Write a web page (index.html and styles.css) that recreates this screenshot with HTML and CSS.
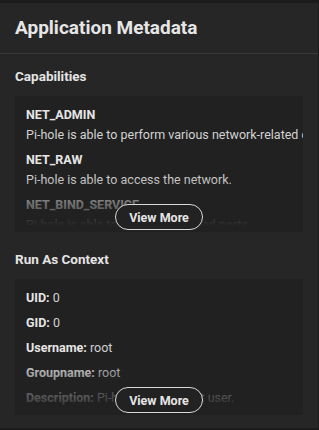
FILE: index.html
```html
<!DOCTYPE html>
<html>
<head>
<meta charset="utf-8">
<link rel="stylesheet" href="styles.css">
</head>
<body>
<div class="card">
  <div class="card-header">
    <h1 class="title">Application Metadata</h1>
  </div>
  <section class="section">
    <h2 class="section-title">Capabilities</h2>
    <div class="box">
      <div class="list">
        <div class="item">
          <div class="item-name">NET_ADMIN</div>
          <div class="item-desc">Pi-hole is able to perform various network-related operations.</div>
        </div>
        <div class="item">
          <div class="item-name">NET_RAW</div>
          <div class="item-desc">Pi-hole is able to access the network.</div>
        </div>
        <div class="item">
          <div class="item-name">NET_BIND_SERVICE</div>
          <div class="item-desc">Pi-hole is able to bind to privileged ports.</div>
        </div>
      </div>
      <div class="fade"></div>
      <button class="more">View More</button>
    </div>
  </section>
  <section class="section">
    <h2 class="section-title">Run As Context</h2>
    <div class="box">
      <div class="rows">
        <div class="row"><span class="key">UID:</span> <span class="val">0</span></div>
        <div class="row"><span class="key">GID:</span> <span class="val">0</span></div>
        <div class="row"><span class="key">Username:</span> <span class="val">root</span></div>
        <div class="row"><span class="key">Groupname:</span> <span class="val">root</span></div>
        <div class="row"><span class="key">Description:</span> <span class="val">Pi-hole runs as root user.</span></div>
      </div>
      <div class="fade"></div>
      <button class="more">View More</button>
    </div>
  </section>
</div>
</body>
</html>
```

FILE: styles.css
```css
html, body {
  margin: 0;
  padding: 0;
  background: #1b1b1b;
}
body {
  padding: 3px 1px 0 0;
  font-family: Roboto, "Liberation Sans", sans-serif;
  color: #e2e2e2;
}
.card {
  background: #262626;
  height: 425px;
  overflow: hidden;
}
.card-header {
  padding: 14px 15px 14px;
  border-bottom: 1px solid #3a3a3a;
}
.title {
  margin: 0;
  font-size: 19px;
  line-height: 22px;
  font-weight: 700;
  color: #e6e6e6;
}
.section {
  padding: 14px 15px 0;
}
.section + .section {
  padding-top: 19px;
}
.section-title {
  margin: 0 0 12px;
  font-size: 13.5px;
  line-height: 16px;
  font-weight: 700;
  color: #e4e4e4;
}
.box {
  position: relative;
  background: #212121;
  height: 136px;
  overflow: hidden;
  padding: 10px 0 0 11px;
  box-sizing: border-box;
}
.list {
  display: flex;
  flex-direction: column;
  gap: 7px;
}
.item-name {
  font-size: 12.5px;
  line-height: 18px;
  font-weight: 700;
  color: #e6e6e6;
  white-space: nowrap;
}
.item-desc {
  margin-top: 2px;
  font-size: 12.5px;
  line-height: 18px;
  color: #d2d2d2;
  white-space: nowrap;
}
.rows {
  display: flex;
  flex-direction: column;
  gap: 7px;
}
.row {
  font-size: 12.5px;
  line-height: 18px;
  white-space: nowrap;
}
.key {
  font-weight: 700;
  color: #e6e6e6;
}
.val {
  color: #d2d2d2;
}
.fade {
  position: absolute;
  left: 0;
  right: 0;
  bottom: 0;
  height: 56px;
  background: linear-gradient(to bottom, rgba(33,33,33,0) 0%, rgba(33,33,33,0.3) 25%, rgba(33,33,33,0.6) 50%, rgba(33,33,33,0.75) 70%, #212121 90%, #212121 100%);
}
.more {
  position: absolute;
  left: 50%;
  bottom: 2px;
  transform: translateX(-50%);
  width: 88px;
  height: 26px;
  border: 1px solid #d8d8d8;
  border-radius: 13px;
  background: #222222;
  color: #e6e6e6;
  font-family: Roboto, "Liberation Sans", sans-serif;
  font-size: 12.5px;
  font-weight: 700;
  padding: 0;
  cursor: pointer;
}
```
